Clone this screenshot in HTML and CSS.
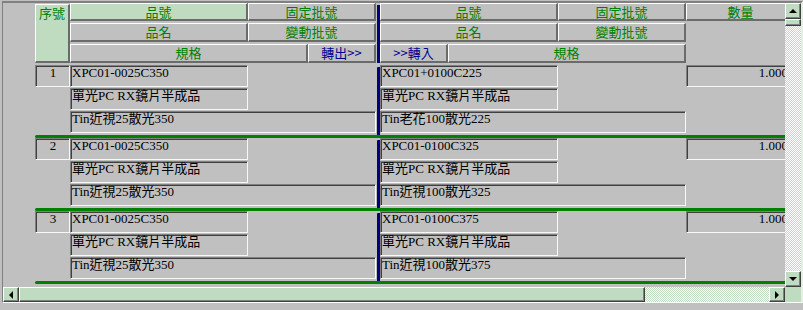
FILE: index.html
```html
<!DOCTYPE html>
<html lang="zh-Hant">
<head>
    <meta charset="UTF-8">
    <title>轉出轉入</title>
    <link rel="stylesheet" href="styles.css">
</head>
<body>
<div class="frame">
    <div class="main">
        <div class="view">
            <div class="head">
                <div class="hc seq">序號</div>
                <div class="hc sel l-code">品號</div>
                <div class="hc l-lot">固定批號</div>
                <div class="hbar"></div>
                <div class="hc r-code">品號</div>
                <div class="hc r-lot">固定批號</div>
                <div class="hc qty-h">數量</div>
                <div class="hc l-name">品名</div>
                <div class="hc l-lot2">變動批號</div>
                <div class="hc r-name">品名</div>
                <div class="hc r-lot2">變動批號</div>
                <div class="hc l-spec">規格</div>
                <div class="hc out">轉出&gt;&gt;</div>
                <div class="hc in">&gt;&gt;轉入</div>
                <div class="hc r-spec">規格</div>
            </div>

            <div class="rec">
                <div class="cell no">1</div>
                <div class="cell l-code">XPC01-0025C350</div>
                <div class="cell l-name">單光PC RX鏡片半成品</div>
                <div class="cell l-spec">Tin近視25散光350</div>
                <div class="bar"></div>
                <div class="cell r-code">XPC01+0100C225</div>
                <div class="cell r-name">單光PC RX鏡片半成品</div>
                <div class="cell r-spec">Tin老花100散光225</div>
                <div class="cell qty">1.000</div>
            </div>
            <div class="sep"></div>

            <div class="rec">
                <div class="cell no">2</div>
                <div class="cell l-code">XPC01-0025C350</div>
                <div class="cell l-name">單光PC RX鏡片半成品</div>
                <div class="cell l-spec">Tin近視25散光350</div>
                <div class="bar"></div>
                <div class="cell r-code">XPC01-0100C325</div>
                <div class="cell r-name">單光PC RX鏡片半成品</div>
                <div class="cell r-spec">Tin近視100散光325</div>
                <div class="cell qty">1.000</div>
            </div>
            <div class="sep"></div>

            <div class="rec">
                <div class="cell no">3</div>
                <div class="cell l-code">XPC01-0025C350</div>
                <div class="cell l-name">單光PC RX鏡片半成品</div>
                <div class="cell l-spec">Tin近視25散光350</div>
                <div class="bar"></div>
                <div class="cell r-code">XPC01-0100C375</div>
                <div class="cell r-name">單光PC RX鏡片半成品</div>
                <div class="cell r-spec">Tin近視100散光375</div>
                <div class="cell qty">1.000</div>
            </div>
            <div class="sep"></div>
        </div>

        <div class="vscroll">
            <div class="btn"><span class="arrow up"></span></div>
            <div class="thumb-v"></div>
            <div class="track"></div>
            <div class="btn"><span class="arrow down"></span></div>
        </div>
    </div>

    <div class="hscroll">
        <div class="btn"><span class="arrow left"></span></div>
        <div class="thumb-h"></div>
        <div class="track"></div>
        <div class="btn"><span class="arrow right"></span></div>
        <div class="corner"></div>
    </div>
</div>
</body>
</html>
```

FILE: styles.css
```css
body {
    margin: 0;
    background-color: #c0c0c0;
    font-family: "Liberation Serif", "Noto Sans CJK TC", serif;
    font-size: 13px;
    color: #000;
    height: 310px;
    overflow: hidden;
}

.frame {
    width: 798px;
    margin: 1px 0 0 2px;
    border-top: 2px solid #808080;
    border-left: 1px solid #808080;
    border-right: 2px solid #e4f0e4;
    border-bottom: 1px solid #ffffff;
}

.main {
    display: flex;
    height: 284px;
}

.view {
    width: 782px;
    padding-left: 32px;
    box-sizing: border-box;
    overflow: hidden;
}

/* shared column layout for header and records */
.head,
.rec {
    display: grid;
    grid-template-columns: 35px 178px 60px 68px 4px 68px 110px 128px 106px;
    width: 757px;
}

.head {
    grid-template-rows: 18px 19px 19px;
    row-gap: 2px;
    margin-bottom: 2px;
}

.hc {
    box-sizing: border-box;
    border-style: solid;
    border-width: 1px 2px 2px 1px;
    border-color: #ffffff #6b6b6b #6b6b6b #ffffff;
    background-color: #c0c0c0;
    color: #008000;
    font-family: "Noto Sans CJK TC", sans-serif;
    line-height: 15px;
    text-align: center;
    white-space: nowrap;
    overflow: hidden;
}

.hc.sel,
.hc.seq {
    background-color: #c0dcc0;
}

.hc.seq {
    grid-column: 1;
    grid-row: 1 / 4;
    margin-top: 1px;
}

.head .l-code { grid-column: 2; grid-row: 1; }
.head .l-lot { grid-column: 3 / 5; grid-row: 1; }
.head .r-code { grid-column: 6 / 8; grid-row: 1; }
.head .r-lot { grid-column: 8; grid-row: 1; }
.head .qty-h { grid-column: 9; grid-row: 1; padding-left: 4px; }
.head .l-name { grid-column: 2; grid-row: 2; }
.head .l-lot2 { grid-column: 3 / 5; grid-row: 2; }
.head .r-name { grid-column: 6 / 8; grid-row: 2; }
.head .r-lot2 { grid-column: 8; grid-row: 2; }
.head .l-spec { grid-column: 2 / 4; grid-row: 3; }
.head .out { grid-column: 4; grid-row: 3; }
.head .in { grid-column: 6; grid-row: 3; }
.head .r-spec { grid-column: 7 / 9; grid-row: 3; }

.hc.out,
.hc.in {
    color: #000090;
}

.hbar {
    grid-column: 5;
    grid-row: 1 / 4;
    margin: 2px 0 0 1px;
    background-color: #000080;
}

.rec {
    grid-template-rows: 22px 22px 22px;
    row-gap: 1px;
}

.cell {
    box-sizing: border-box;
    border-style: solid;
    border-width: 1px;
    border-color: #808080 #f8f8f8 #f8f8f8 #808080;
    box-shadow: inset 1px 1px 0 #404040;
    padding: 0 0 0 1px;
    line-height: 13px;
    white-space: nowrap;
    overflow: hidden;
}

.rec .no { grid-column: 1; grid-row: 1; text-align: center; }
.rec .l-code { grid-column: 2; grid-row: 1; }
.rec .l-name { grid-column: 2; grid-row: 2; }
.rec .l-spec { grid-column: 2 / 5; grid-row: 3; }
.rec .r-code { grid-column: 6 / 8; grid-row: 1; }
.rec .r-name { grid-column: 6 / 8; grid-row: 2; }
.rec .r-spec { grid-column: 6 / 9; grid-row: 3; }
.rec .qty { grid-column: 9; grid-row: 1; text-align: right; padding-right: 3px; }

.bar {
    grid-column: 5;
    grid-row: 1 / 4;
    margin: 2px 0 -2px 1px;
    background-color: #000080;
    border-top-left-radius: 1px;
}

.sep {
    width: 757px;
    height: 3px;
    margin-top: 2px;
    background-color: #008000;
    border-radius: 2px 0 0 2px;
}

/* scrollbars */
.vscroll {
    width: 16px;
    display: flex;
    flex-direction: column;
}

.hscroll {
    display: flex;
    height: 15px;
}

.btn,
.thumb-v,
.thumb-h {
    box-sizing: border-box;
    background-color: #c0dcc0;
    border: 1px solid;
    border-color: #ffffff #404040 #404040 #ffffff;
    box-shadow: inset -1px -1px 0 #808080;
}

.btn {
    display: flex;
    align-items: center;
    justify-content: center;
}

.vscroll .btn {
    height: 16px;
}

.hscroll .btn {
    width: 16px;
}

.thumb-v {
    height: 7px;
}

.thumb-h {
    width: 626px;
}

.track {
    flex: 1;
    background-image: conic-gradient(#ffffff 25%, #c0dcc0 0 50%, #ffffff 0 75%, #c0dcc0 0);
    background-size: 2px 2px;
}

.corner {
    width: 16px;
    background-color: #c0dcc0;
}

.arrow {
    width: 0;
    height: 0;
    border: 0 solid transparent;
}

.arrow.up {
    border-width: 0 4px 4px 4px;
    border-bottom-color: #000;
    margin-top: -1px;
}

.arrow.down {
    border-width: 4px 4px 0 4px;
    border-top-color: #000;
}

.arrow.left {
    border-width: 4px 4px 4px 0;
    border-right-color: #000;
}

.arrow.right {
    border-width: 4px 0 4px 4px;
    border-left-color: #000;
}
```
